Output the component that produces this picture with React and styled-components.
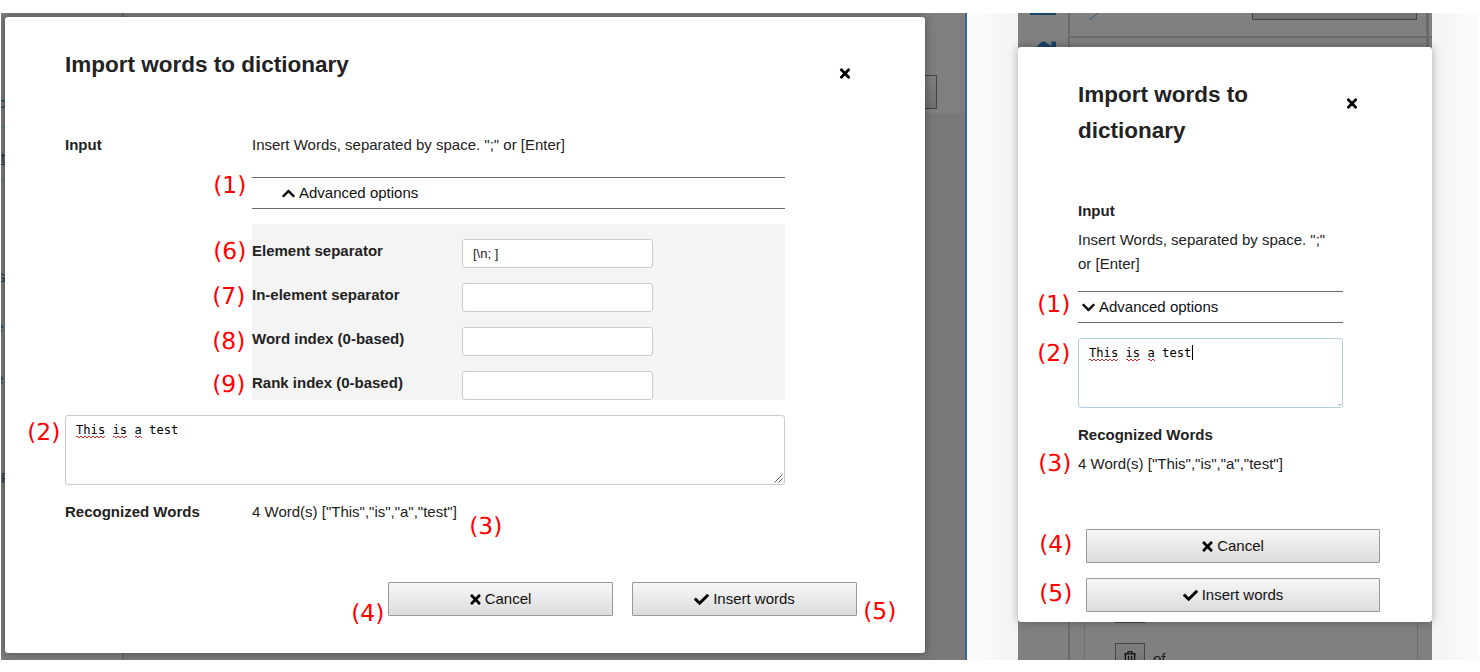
import React from "react";
import styled, { createGlobalStyle, css } from "styled-components";
import { FaTimes, FaCheck, FaChevronUp, FaChevronDown, FaRegTrashAlt } from "react-icons/fa";

const GlobalStyle = createGlobalStyle`
  *, *::before, *::after { box-sizing: border-box; }
  body {
    margin: 0;
    background: #fff;
    color: #222;
    font: 15px/24px "Liberation Sans", Arial, sans-serif;
  }
`;

const Stage = styled.main`
  position: relative;
  display: flex;
  width: 1480px;
  height: 672px;
  padding: 13px 1px 12px;
  overflow: hidden;
`;

const DesktopScreen = styled.section`
  position: relative;
  display: flex;
  width: 966px;
  overflow: hidden;
  background: #7c7c7c;
  border-right: 2px solid #316a98;
`;

const PhoneScreen = styled.section`
  position: relative;
  display: flex;
  width: 414px;
  background: #808080;
`;

const Gutter = styled.div`
  width: ${(p) => p.$width}px;
  background: linear-gradient(to ${(p) => p.$toward}, #fafafa 30%, #f3f3f3);
`;

/* Dimmed desktop page */
const SideNav = styled.nav`
  width: 123px;
  padding-top: 78px;
  background: #7b7e7d;
  border-right: 2px solid #696969;
`;

const NavItem = styled.div`
  height: ${(p) => p.$height}px;
  overflow: hidden;
  color: #1d3c50;
  line-height: 24px;
  text-indent: ${(p) => p.$indent}px;
  padding-top: ${(p) => p.$drop || 0}px;
  border-bottom: ${(p) => (p.$ruled ? "2px solid #687874" : "none")};
  text-decoration: ${(p) => (p.$linked ? "underline" : "none")};
`;

const DesktopMain = styled.div`
  flex: 1;
  display: flex;
  flex-direction: column;
  background: #797979;
`;

const DesktopHeader = styled.div`
  display: flex;
  justify-content: flex-end;
  align-items: flex-end;
  height: 100px;
  padding: 0 28px 4px;
  background: #7f7f7f;
`;

const DimButton = styled.div`
  display: flex;
  justify-content: center;
  width: ${(p) => p.$width}px;
  height: 34px;
  padding-top: 7px;
  flex: none;
  color: #111;
  font-size: 14px;
  background: linear-gradient(#7e7e7e, #707070);
  border: 1px solid #454545;
`;

/* Dimmed phone page */
const Rail = styled.div`
  display: flex;
  flex-direction: column;
  align-items: center;
  gap: 26px;
  width: 52px;
  flex: none;
  overflow: hidden;
  border-right: 2px solid #6b6b6b;
`;

const RailBar = styled.div`
  width: 26px;
  height: 2px;
  flex: none;
  background: #1a4468;
`;

const HomeIcon = styled.svg`
  width: 28px;
  height: 24px;
  flex: none;
  fill: #1a4468;
`;

const PhoneMain = styled.div`
  flex: 1;
  display: flex;
  flex-direction: column;
  overflow: hidden;
`;

const PhoneToolbar = styled.div`
  display: flex;
  justify-content: space-between;
  align-items: flex-end;
  height: 25px;
  flex: none;
  padding: 0 15px 16px;
  border-bottom: 2px solid #6b6b6b;
`;

const PhoneLogo = styled.svg`
  width: 14px;
  height: 9px;
  margin-left: 3px;
`;

const PhoneList = styled.div`
  flex: 1;
  display: flex;
  flex-direction: column;
  justify-content: flex-end;
  gap: 20px;
  margin: 30px 14px 0 14px;
  padding-left: 30px;
  border: solid #6f6f6f;
  border-width: 0 1px;
`;

const PhoneRow = styled.div`
  display: flex;
  gap: 8px;
  height: ${(p) => p.$height}px;
  flex: none;
  color: #1c1c1c;
  line-height: 32px;
`;

const ScrollMark = styled.div`
  position: absolute;
  top: 0;
  right: 3px;
  width: 3px;
  height: 60px;
  background: #6a6a6a;
`;

/* Dialog */
const Dialog = styled.div`
  position: absolute;
  display: flex;
  flex-direction: column;
  padding-left: 60px;
  padding-top: 29px;
  background: #fff;
  border-radius: 3px;
  box-shadow: 0 0 10px rgba(0, 0, 0, 0.4);
  ${(p) =>
    p.$compact
      ? css`top: 34px; left: 0; width: 414px; height: 575px; box-shadow: 0 0 10px rgba(0, 0, 0, 0.3);`
      : css`top: 4px; left: 4px; width: 920px; height: 636px;`}
`;

const DialogHeader = styled.header`
  display: flex;
  justify-content: space-between;
  align-items: flex-start;
  margin-bottom: 50px;
  padding-right: 74px;
`;

const Title = styled.h2`
  margin: 1px 0 0;
  max-width: ${(p) => (p.$compact ? "210px" : "none")};
  font-size: 22.5px;
  font-weight: bold;
  line-height: 36px;
`;

const CloseButton = styled.button`
  display: flex;
  margin-top: 20px;
  padding: 0;
  width: 12px;
  height: 15px;
  align-items: center;
  justify-content: center;
  color: #000;
  background: none;
  border: 0;
  font-size: 15px;
`;

const Body = styled.div`
  width: ${(p) => (p.$compact ? 265 : 720)}px;
`;

const Field = styled.div`
  display: grid;
  grid-template-columns: ${(p) => (p.$compact ? "1fr" : "187px 1fr")};
  row-gap: 5px;
`;

const Label = styled.div`
  font-weight: bold;
`;

const Hint = styled.div`
  padding-right: ${(p) => (p.$compact ? 10 : 0)}px;
`;

const Advanced = styled.div`
  display: flex;
  align-items: center;
  gap: 4px;
  height: 32px;
  margin: ${(p) => (p.$compact ? "15px 0 0" : "20px 0 15px")};
  padding-left: ${(p) => (p.$compact ? 4 : 30)}px;
  border: solid #6b6b6b;
  border-width: 1px 0;
  color: #111;

  svg { width: 13px; height: 15px; }
`;

const OptionPanel = styled.div`
  display: flex;
  flex-direction: column;
  gap: 15px;
  padding-top: 15px;
  background: #f4f4f4;
`;

const OptionRow = styled.label`
  display: grid;
  grid-template-columns: 210px 191px;
  height: 29px;
`;

const TextInput = styled.input`
  height: 29px;
  padding: 0 10px;
  color: #222;
  font: 13px "Liberation Sans", Arial, sans-serif;
  background: #fff;
  border: 1px solid #ccc;
  border-radius: 3px;
`;

const WordsArea = styled.div`
  position: relative;
  height: 70px;
  margin: 15px 0;
  padding: 4px 10px;
  color: #000;
  font: 12.15px/20px "DejaVu Sans Mono", monospace;
  background: #fff;
  border: 1px solid ${(p) => (p.$focused ? "#add3de" : "#ccc")};
  border-radius: 3px;
`;

const Misspelt = styled.span`
  padding-bottom: 1px;
  background:
    repeating-linear-gradient(90deg, #d62a2a 0 2px, transparent 2px 4px) 0 calc(100% - 1px) / 100% 1px no-repeat,
    repeating-linear-gradient(90deg, transparent 0 2px, #d62a2a 2px 4px) 0 100% / 100% 1px no-repeat;
`;

const Caret = styled.span`
  display: inline-block;
  width: 1px;
  height: 15px;
  margin-left: 1px;
  vertical-align: -3px;
  background: #000;
`;

const Grip = styled.svg`
  position: absolute;
  right: 1px;
  bottom: 1px;
  width: 9px;
  height: 9px;
`;

const Actions = styled.footer`
  display: flex;
  flex-direction: ${(p) => (p.$compact ? "column" : "row")};
  justify-content: flex-end;
  gap: ${(p) => (p.$compact ? 15 : 19)}px;
  margin: ${(p) => (p.$compact ? "53px 52px 0 8px" : "58px 68px 0 0")};
`;

const ActionButton = styled.button`
  display: flex;
  align-items: center;
  justify-content: center;
  gap: ${(p) => p.$gap}px;
  width: ${(p) => (p.$compact ? 294 : 225)}px;
  height: 34px;
  padding: 0;
  color: #111;
  font: 15px/24px "Liberation Sans", Arial, sans-serif;
  background: linear-gradient(#f7f7f7, #dcdcdc);
  border: 1px solid #999;
  border-radius: 1px;

  svg { width: ${(p) => p.$icon}px; height: 15px; color: #000; }
`;

const Marker = styled.span`
  position: absolute;
  top: ${(p) => p.$y}px;
  left: ${(p) => p.$x + 1.2}px;
  color: #f00;
  font: 23.4px/28px "DejaVu Sans", sans-serif;
  text-rendering: geometricPrecision;
  white-space: nowrap;
`;

const navItems = [
  { text: "c", height: 37, indent: -3, ruled: true },
  { text: "t", height: 53, indent: 0, drop: 18, ruled: true, linked: true },
  { text: "", height: 84 },
  { text: "s", height: 50, indent: -3 },
  { text: "e", height: 52, indent: -6 },
  { text: "e", height: 99, indent: -6 },
  { text: "P", height: 24, indent: 0 },
];

const options = [
  ["Element separator", "[\\n; ]"],
  ["In-element separator", ""],
  ["Word index (0-based)", ""],
  ["Rank index (0-based)", ""],
];

const markers = [
  [1, 212, 171], [6, 212, 237], [7, 211, 282], [8, 211, 327], [9, 211, 370],
  [2, 26, 418], [3, 468, 512], [4, 350, 599], [5, 862, 597],
  [1, 1036, 290], [2, 1036, 339], [3, 1037, 449], [4, 1038, 530], [5, 1038, 579],
];

function WordsField({ focused }) {
  return (
    <WordsArea $focused={focused}>
      <Misspelt>This</Misspelt> <Misspelt>is</Misspelt> <Misspelt>a</Misspelt> test
      {focused && <Caret />}
      <Grip viewBox="0 0 9 9" stroke="#555" fill="none">
        {focused ? <path d="M7 8.5L8.5 7" /> : <path d="M0.5 8.5L8.5 0.5M4.5 8.5L8.5 4.5" />}
      </Grip>
    </WordsArea>
  );
}

function ImportDialog({ compact }) {
  const Chevron = compact ? FaChevronDown : FaChevronUp;
  return (
    <Dialog $compact={compact}>
      <DialogHeader>
        <Title $compact={compact}>Import words to dictionary</Title>
        <CloseButton aria-label="Close"><FaTimes /></CloseButton>
      </DialogHeader>
      <Body $compact={compact}>
        <Field $compact={compact}>
          <Label>Input</Label>
          <div>
            <Hint $compact={compact}>Insert Words, separated by space. ";" or [Enter]</Hint>
            <Advanced $compact={compact}>
              <Chevron />
              Advanced options
            </Advanced>
            {!compact && (
              <OptionPanel>
                {options.map(([name, value]) => (
                  <OptionRow key={name}>
                    <Label>{name}</Label>
                    <TextInput defaultValue={value} />
                  </OptionRow>
                ))}
              </OptionPanel>
            )}
          </div>
        </Field>
        <WordsField focused={compact} />
        <Field $compact={compact}>
          <Label>Recognized Words</Label>
          <div>4 Word(s) ["This","is","a","test"]</div>
        </Field>
      </Body>
      <Actions $compact={compact}>
        <ActionButton $compact={compact} $icon={11} $gap={4}><FaTimes />Cancel</ActionButton>
        <ActionButton $compact={compact} $icon={15} $gap={4}><FaCheck />Insert words</ActionButton>
      </Actions>
    </Dialog>
  );
}

export default function App() {
  return (
    <>
      <GlobalStyle />
      <Stage>
        <DesktopScreen>
          <SideNav>
            {navItems.map((n, i) => (
              <NavItem key={i} $height={n.height} $indent={n.indent || 0} $drop={n.drop} $ruled={n.ruled} $linked={n.linked}>
                {n.text}
              </NavItem>
            ))}
          </SideNav>
          <DesktopMain>
            <DesktopHeader><DimButton $width={120} /></DesktopHeader>
          </DesktopMain>
          <ImportDialog />
        </DesktopScreen>
        <Gutter $width={51} $toward="right" />
        <PhoneScreen>
          <Rail>
            <RailBar />
            <HomeIcon viewBox="0 0 28 24">
              <path d="M14 0.5Q15.500 0 17 1.500L22.500 5V0.500H27V9L28 13H24V24H5V13H0L12 1.500Z" />
            </HomeIcon>
          </Rail>
          <PhoneMain>
            <PhoneToolbar>
              <PhoneLogo viewBox="0 0 14 9" fill="none" stroke="#2c5c80">
                <path d="M1 8.500Q6 6 10 2" />
              </PhoneLogo>
              <DimButton $width={165} />
            </PhoneToolbar>
            <PhoneList>
              <PhoneRow $height={34}><DimButton $width={30} /></PhoneRow>
              <PhoneRow $height={17}>
                <DimButton $width={30}><FaRegTrashAlt /></DimButton>
                of
              </PhoneRow>
            </PhoneList>
          </PhoneMain>
          <ScrollMark />
          <ImportDialog compact />
        </PhoneScreen>
        <Gutter $width={47} $toward="left" />
        {markers.map(([n, x, y]) => (
          <Marker key={`${x}-${y}`} $x={x} $y={y}>({n})</Marker>
        ))}
      </Stage>
    </>
  );
}
